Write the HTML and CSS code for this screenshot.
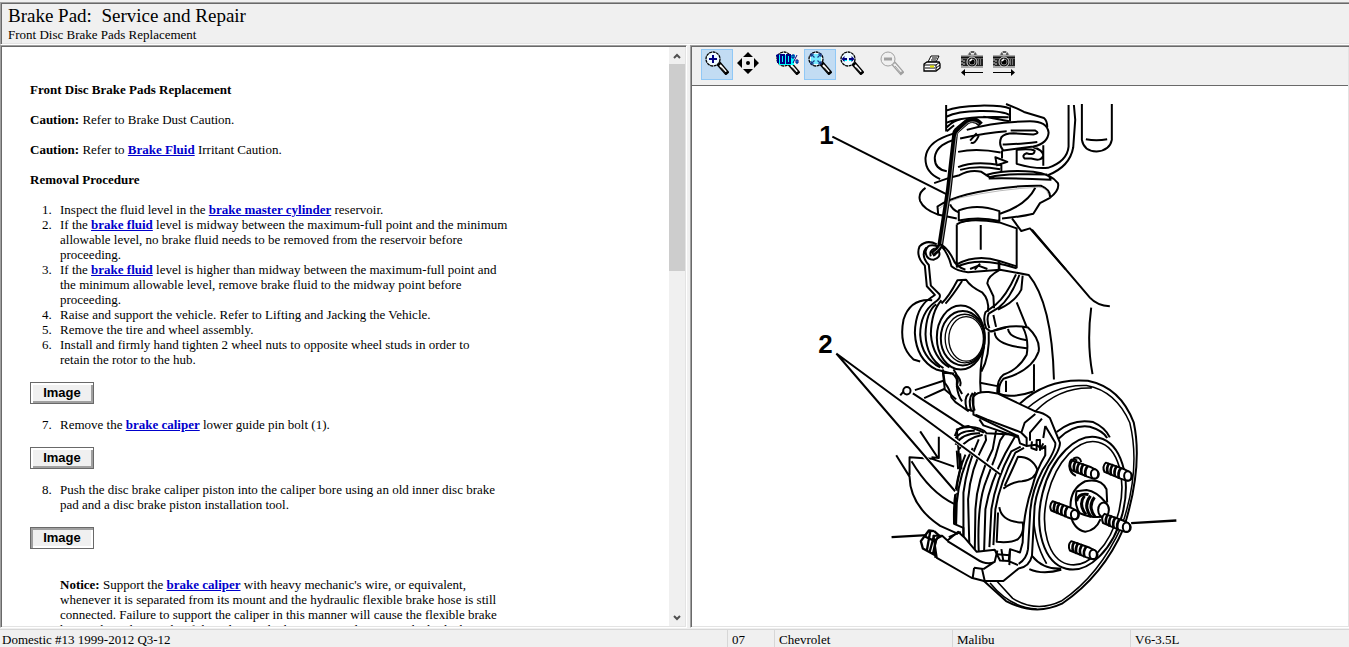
FILE: index.html
```html
<!DOCTYPE html>
<html lang="en">
<head>
<meta charset="utf-8">
<title>Brake Pad: Service and Repair</title>
<link rel="stylesheet" href="styles.css">
</head>
<body>
<svg class="defs" aria-hidden="true">
  <defs>
    <symbol id="glass" viewBox="0 0 24 24">
      <path d="M14 13L21 21" stroke="#000" stroke-width="5" stroke-linecap="square"/>
      <path d="M15 14L21 21" stroke="#fff" stroke-width="2"/>
      <path d="M16 16.500L21 22" stroke="#000" stroke-width="1"/>
      <circle cx="8" cy="8" r="7" fill="#eefaff" stroke="#000" stroke-width="1.300" stroke-dasharray="3 .6"/>
    </symbol>
    <symbol id="camera" viewBox="0 0 24 24">
      <path d="M8 5l2-3h5l2 3z" fill="#eee" stroke="#888" stroke-width="1"/>
      <path d="M11 2h3M9 4h2M14 4h2" stroke="#000"/>
      <path d="M1 5h22v13H1z" fill="#a8a8a8"/>
      <path d="M1 7.500h22" stroke="#111" stroke-width="2"/>
      <path d="M1 9h22v7H1z" fill="#222"/>
      <path d="M2 9v7M4 10v5" stroke="#ccc" stroke-dasharray="2 1"/>
      <circle cx="12" cy="12" r="5" fill="#111" stroke="#ddd"/>
      <circle cx="12" cy="12" r="3" fill="#000" stroke="#888"/>
      <path d="M10 11l2-2" stroke="#fff" stroke-width="1.500"/>
      <path d="M18 10h4M18 12h4M18 14h4" stroke="#ccc" stroke-dasharray="1 1"/>
    </symbol>
    <g id="stud">
      <path d="M4 4L60 24 72 30Q86 38 82 50 78 60 66 58L48 52 0 32Q-8 16 4 4z" fill="#fff"/>
      <path d="M14 6Q4 20 10 36M26 9Q14 24 20 42M38 14Q26 28 32 46M50 20Q38 34 44 52" stroke-width="8"/>
      <ellipse cx="70" cy="44" rx="11" ry="14" fill="#fff"/>
    </g>
  </defs>
</svg>

<header class="heading">
  <h1>Brake Pad:&nbsp; Service and Repair</h1>
  <p>Front Disc Brake Pads Replacement</p>
</header>

<main class="panes">
  <section class="pane article-pane">
    <article class="article">
      <p><b>Front Disc Brake Pads Replacement</b></p>
      <p><b>Caution:</b> Refer to Brake Dust Caution.</p>
      <p><b>Caution:</b> Refer to <a href="#">Brake Fluid</a> Irritant Caution.</p>
      <p><b>Removal Procedure</b></p>
      <ol>
        <li>Inspect the fluid level in the <a href="#">brake master cylinder</a> reservoir.</li>
        <li>If the <a href="#">brake fluid</a> level is midway between the maximum-full point and the minimum allowable level, no brake fluid needs to be removed from the reservoir before proceeding.</li>
        <li>If the <a href="#">brake fluid</a> level is higher than midway between the maximum-full point and the minimum allowable level, remove brake fluid to the midway point before proceeding.</li>
        <li>Raise and support the vehicle. Refer to Lifting and Jacking the Vehicle.</li>
        <li>Remove the tire and wheel assembly.</li>
        <li>Install and firmly hand tighten 2 wheel nuts to opposite wheel studs in order to<br>retain the rotor to the hub.</li>
      </ol>
      <button class="image-button" type="button">Image</button>
      <ol start="7">
        <li>Remove the <a href="#">brake caliper</a> lower guide pin bolt (1).</li>
      </ol>
      <button class="image-button" type="button">Image</button>
      <ol start="8">
        <li>Push the disc brake caliper piston into the caliper bore using an old inner disc brake pad and a disc brake piston installation tool.</li>
      </ol>
      <button class="image-button pressed" type="button">Image</button>
      <p class="notice"><b>Notice:</b> Support the <a href="#">brake caliper</a> with heavy mechanic's wire, or equivalent, whenever it is separated from its mount and the hydraulic flexible brake hose is still connected. Failure to support the caliper in this manner will cause the flexible brake hose to bear the weight of the caliper, which may cause damage to the brake hose</p>
    </article>
    <div class="scrollbar">
      <button class="arrow" type="button" aria-label="Scroll up"><svg width="8" height="8" viewBox="0 0 8 8"><path d="M1 6L4 3 7 6" fill="none" stroke="#505050" stroke-width="2"/></svg></button>
      <div class="track"><div class="thumb"></div></div>
      <button class="arrow" type="button" aria-label="Scroll down"><svg width="8" height="8" viewBox="0 0 8 8"><path d="M1 2L4 5 7 2" fill="none" stroke="#505050" stroke-width="2"/></svg></button>
    </div>
  </section>

  <section class="pane image-pane">
    <div class="toolbar">
      <div class="tools">
        <button class="tool active" type="button" aria-label="Zoom in"><svg viewBox="0 0 24 24"><use href="#glass"/><path d="M8 4v8M4 8h8" stroke="#000080" stroke-width="2"/></svg></button>
        <button class="tool" type="button" aria-label="Pan"><svg viewBox="0 0 24 24"><path d="M11 1l5 5H6zM11 23l5-5H6zM0 12l5-5v10zM22 12l-5-5v10z"/><circle cx="11" cy="12" r="2"/></svg></button>
      </div>
      <div class="tools">
        <button class="tool" type="button" aria-label="Actual size"><svg viewBox="0 0 24 24"><use href="#glass"/><path d="M2 5h3v8H3M7 5h4v8H7zM13 5h4v8h-4z" fill="#00ffff" stroke="#00ffff" stroke-width="2"/><path d="M0 5l2-1v8M5 4h3v8H5zM11 4h3v8h-3z" fill="none" stroke="#000080" stroke-width="2"/><path d="M17 12l4-8" stroke="#000080"/><path d="M17 5h2M20 11h2" stroke="#00cfff" stroke-width="3"/><path d="M16 4h2v3h-2zM20 9h2v3h-2z" fill="none" stroke="#000080"/></svg></button>
        <button class="tool active" type="button" aria-label="Fit to window"><svg viewBox="0 0 24 24"><use href="#glass"/><path d="M3 3h10v10H3z" fill="#77eaff"/><path d="M3 6V3h3M10 3h3v3M13 10v3h-3M6 13H3v-3M3 3l3.500 3.500M13 3L9.500 6.500M13 13L9.500 9.500M3 13l3.500-3.500" fill="none" stroke="#1a3c8c" stroke-width="1.200"/></svg></button>
        <button class="tool" type="button" aria-label="Fit to width"><svg viewBox="0 0 24 24"><use href="#glass"/><path d="M3 9h4M9 9h4" stroke="#00ffff" stroke-width="2"/><path d="M1.500 8l3-3v2h2.500v2H4.500v2zM14.500 8l-3-3v2H9v2h2.500v2z" fill="#000080"/></svg></button>
      </div>
      <div class="tools">
        <button class="tool" type="button" disabled aria-label="Zoom out"><svg viewBox="0 0 24 24"><path d="M14 13L21 21" stroke="#a0a0a0" stroke-width="5" stroke-linecap="square"/><path d="M14 13L21 21" stroke="#f0f0f0" stroke-width="2.500"/><path d="M15 15l6 7" stroke="#a0a0a0"/><circle cx="8" cy="8" r="7" fill="#f0f0f0" stroke="#a0a0a0"/><path d="M4 8h8" stroke="#a0a0a0" stroke-width="3"/></svg></button>
      </div>
      <div class="tools">
        <button class="tool" type="button" aria-label="Print"><svg viewBox="0 0 24 24"><path d="M8 11l3-6h8l-3 6z" fill="#fff" stroke="#000"/><path d="M12 7h5M11 9h5" stroke="#000"/><path d="M4 13l3-2h12l1 2v4l-4 3H4z" fill="#fff" stroke="#000" stroke-width="1.300"/><path d="M4 14h12v5M16 14l4-3M16 17l4-3" fill="none" stroke="#000"/><path d="M5 17h10" stroke="#000"/><path d="M10 15.500h4" stroke="#e6e600" stroke-width="2"/></svg></button>
      </div>
      <div class="tools">
        <button class="tool" type="button" aria-label="Previous image"><svg viewBox="0 0 24 26"><use href="#camera" width="24" height="24"/><path d="M4 22.500h19" stroke="#000"/><path d="M1 22.500l4-3.500v7z"/></svg></button>
        <button class="tool" type="button" aria-label="Next image"><svg viewBox="0 0 24 26"><use href="#camera" width="24" height="24"/><path d="M1 22.500h19" stroke="#000"/><path d="M23 22.500l-4-3.500v7z"/></svg></button>
      </div>
    </div>
    <div class="canvas">
      <svg class="diagram" viewBox="692 86 656 541" role="img" aria-label="Front strut, brake caliper and rotor">
        <g fill="none" stroke="#000" stroke-width="6" stroke-linejoin="round">
          <!-- strut and coil spring -->
          <g transform="translate(800 90) scale(.33333)">
            <path d="M438 45V125M630 52V95M618 42L652 56 672 66 732 84Q742 92 742 112M438 62Q470 48 540 47T630 56M440 80Q470 64 540 63T630 76M440 98Q490 78 626 82M440 112Q460 92 482 88M550 80L628 94M440 124L462 106"/>
            <path d="M806 45V170Q802 214 744 234 706 238 650 222V178M822 45L826 90 820 172Q810 230 744 256"/>
            <path d="M846 42V150Q852 184 890 185 930 182 936 150V42M858 148Q890 154 922 148" />
            <path d="M420 268Q374 248 376 204 380 160 440 138L468 128M500 120Q580 96 690 94 742 94 746 128 744 160 700 170L610 182Q594 164 604 142 614 130 640 130L700 134Q722 130 706 122L632 122M440 244Q402 238 404 202 408 168 456 152M480 146Q560 128 620 124M608 164Q640 164 712 156M606 182L606 206M474 186Q530 174 602 188M700 172Q728 180 730 196 726 216 694 206L674 206Q664 196 680 190 704 198 704 182Q690 176 650 180M730 166V228"/>
            <path d="M474 232Q520 212 604 226V246M480 240Q530 226 600 238M586 202L622 216 590 226z"/>
            <path d="M402 280Q430 270 454 262L478 256Q510 238 544 246L568 262Q620 250 742 254M556 256Q620 238 700 246 752 252 774 280 780 300 750 324L720 340 700 372Q670 380 606 386M376 294Q352 310 360 334 370 358 412 374L470 386M750 322Q752 300 724 288 620 286 500 314 440 330 412 350L414 372M706 294Q680 346 600 372M746 256L752 270Q640 264 566 266M450 344Q456 360 476 368"/>
            <path d="M744 312Q740 294 716 292 600 298 480 324 440 336 418 356" stroke="#999" stroke-width="2"/>
            <path d="M476 362Q530 340 598 364V394Q540 380 476 392z" fill="#fff"/>
            <path d="M470 404Q500 382 598 398L650 416V536M470 404V530M542 406V480M470 524Q530 492 598 514L650 530M510 538L535 528 562 538M598 516V540M636 386L664 424 690 416 798 540"/>
            <path d="M480 398Q540 384 596 394" stroke-width="4"/>
            <path d="M512 158Q524 164 536 138M510 152L530 130" stroke-width="6"/>
            <path d="M542 104Q522 82 500 96L474 118Q464 124 464 140L446 300 420 468Q412 484 396 494" stroke-width="17"/>
            <path d="M536 102Q520 90 502 100L478 122Q470 128 468 142L448 310 424 464Q416 480 400 490" stroke="#999" stroke-width="3"/>
            <path d="M96 140L440 314"/>
          </g>
          <!-- steering knuckle -->
          <g transform="translate(880 230) scale(.33333)">
            <path d="M170 44Q140 28 118 50 106 80 134 108L140 170 164 196 150 206Q106 234 104 310 108 390 168 420L214 432M184 50Q204 70 214 110 230 124 264 128L360 120 446 136Q516 220 522 450M176 42Q200 50 218 86 226 110 256 120"/>
            <path d="M138 54Q120 78 146 106L152 168 178 194Q184 204 164 218 120 250 120 316 124 384 180 414M172 50Q142 38 136 66 138 90 160 90 184 84 176 64M164 56Q146 62 152 80"/>
            <path d="M156 212Q90 206 70 270 54 350 100 390L120 396M168 224Q138 246 136 314 138 384 190 416M184 212Q154 244 152 314 158 386 208 414M184 222Q206 202 232 152L258 150Q270 170 306 188 328 210 324 246"/>
            <path d="M196 222Q216 200 246 154M360 120Q320 142 322 162L340 200 342 236M408 134Q378 200 346 226L316 248Q308 270 318 296L332 306 378 294M418 136Q392 206 356 234L326 252Q318 270 328 296M428 138L424 180Q406 216 354 240M410 218L440 292M340 256L348 292"/>
            <path d="M228 112Q300 78 410 116M300 102L284 120M356 94V118"/>
            <ellipse cx="242" cy="324" rx="72" ry="96" fill="#fff"/>
            <ellipse cx="248" cy="326" rx="66" ry="82"/>
            <ellipse cx="254" cy="327" rx="59" ry="73" stroke-width="4"/>
            <ellipse cx="258" cy="328" rx="52" ry="67" stroke-width="4"/>
            <path d="M312 294V352Q296 424 302 490M326 306Q330 380 304 426"/>
            <path d="M334 306Q390 282 444 294 482 330 476 366 456 424 370 448 354 466 358 490M428 292Q448 330 440 376 416 420 370 436 350 452 352 490M384 298Q386 324 440 332M344 308Q344 346 440 356M462 404V486M378 454V488M350 490Q390 510 460 486M300 460L352 470"/>
            <path d="M188 426L194 480Q214 496 228 510M216 432Q234 444 230 466L246 494M226 434Q246 450 240 470"/>
            <path d="M456 0L630 204Q652 228 690 230M634 234Q620 340 638 434M104 482L190 454M132 506L194 478M60 498L72 484"/>
            <circle cx="80" cy="484" r="11" fill="#fff"/>
          </g>
          <!-- rotor, hub and caliper -->
          <g transform="translate(860 370) scale(.33333)">
            <path d="M480 102Q564 24 684 34 782 54 822 160 850 292 792 476 730 620 606 704 526 742 438 696L370 634"/>
            <path d="M500 118Q584 44 680 48 768 64 810 160 844 300 786 470 718 620 604 696 530 732 458 688L410 636M526 126Q600 52 696 56M390 642Q450 716 530 720" stroke-width="4.500"/>
            <path d="M590 188Q640 146 700 158 736 174 750 204M596 208Q640 164 690 172 730 184 742 206"/>
            <path d="M508 600Q548 618 604 602M516 560Q550 602 604 598"/>
            <ellipse cx="668" cy="402" rx="124" ry="203" transform="rotate(14 668 402)" fill="#fff"/>
            <ellipse cx="670" cy="402" rx="110" ry="189" transform="rotate(14 670 402)" stroke-width="5"/>
            <path d="M522 374Q510 500 560 584" stroke-width="5"/>
            <path d="M632 420Q628 360 676 336 724 326 740 360L742 400M632 436Q640 480 676 488 708 484 722 450" />
            <use href="#stud" x="634" y="270"/>
            <use href="#stud" x="734" y="276"/>
            <use href="#stud" x="574" y="392"/>
            <use href="#stud" x="630" y="512"/>
            <path d="M650 366L680 362Q710 366 738 400 754 420 738 440 704 450 660 432 642 410 650 366z" fill="#fff"/>
            <path d="M650 396Q656 370 686 376M674 380Q654 404 678 436M692 380Q668 410 694 444M704 384Q682 412 706 444" stroke-width="9"/>
            <ellipse cx="731" cy="422" rx="16" ry="22" fill="#fff"/>
            <use href="#stud" x="730" y="430"/>
            <path d="M814 462L950 454" stroke-width="7"/>
            <path d="M652 274Q630 260 628 290 630 312 648 320M640 268Q660 258 664 278"/>
            <!-- pads and caliper body -->
            <path d="M290 180Q350 162 380 192L470 196Q520 230 560 238L552 290Q520 340 510 400L508 520Q500 550 470 560L340 550 310 530V476L282 464Q278 380 300 300z" fill="#fff"/>
            <path d="M284 200Q290 172 324 170L372 190M282 214Q296 182 344 184M286 226Q308 190 360 192M296 240Q320 206 368 196M290 244L294 300M300 252L304 300M316 256Q296 300 286 380L282 464M338 236Q298 310 290 400L288 466M356 210Q320 290 310 370L310 530M376 196L378 212Q330 300 324 390L328 540M408 184L398 240Q350 330 346 420L344 548M436 190L420 214 406 262 380 330Q350 400 356 548M466 200L436 252Q390 340 376 420L372 550M482 232L454 246Q408 330 394 420L388 534M492 236L466 250Q420 340 406 420L400 528"/>
            <path d="M434 350Q462 290 474 262 516 262 532 300 528 330 486 336 456 338 430 358M418 414Q424 458 488 460 494 490 474 510 454 522 410 518L414 430"/>
            <path d="M340 82Q350 66 386 68L412 72 526 126Q550 128 570 146L600 220Q602 240 566 290 530 360 524 410L516 560Q508 594 476 598L430 636H372L334 626 230 566 220 500 246 500 262 514 294 488 312 504 350 548 404 542 420 574 446 576 450 540 480 550 488 520Q490 430 516 356 530 300 556 258L556 230 546 238 528 226 500 230 480 222 474 200 340 136z" fill="#fff"/>
            <path d="M346 136L380 150 470 184 484 190 494 160 526 134M358 150L370 168 474 204M484 190L500 206V230M510 214V190L546 148M556 170L586 220Q590 240 548 302 512 370 510 440L504 540Q500 570 476 584M556 170L550 206M516 216L514 236 530 242 530 212 540 212V242L550 222" />
            <path d="M326 72Q310 86 320 120L342 126M338 70Q322 90 334 126M346 68Q330 88 344 124M248 0L254 40Q270 60 274 84L286 98 306 112 326 126M280 0Q300 26 290 50 294 80 306 96M250 10L282 12"/>
            <path d="M262 516L350 570Q380 590 404 578L412 544M246 500L230 508Q220 530 226 566M266 504L302 488M342 596L338 626M366 600L374 636M342 596L370 600M370 600L404 578M446 576L474 588M424 540L430 576M450 540L448 588"/>
            <path d="M222 486L206 484 182 516 188 538 228 560M222 486L238 500 224 516M210 488L200 544M222 498L208 550M228 510L218 556M194 502L224 516" stroke-width="7"/>
            <path d="M94 504L200 498" stroke-width="7"/>
            <path d="M108 258L148 322Q150 410 240 470L294 494M148 318V264L214 268 282 292M154 276Q210 370 282 404M180 186L232 264M236 202V266L214 264M158 72L312 172"/>
          </g>
          <path d="M836 354L956 494M836 354L1000 474" stroke="#fff" stroke-width="4"/>
          <path d="M836 354L955 492M836 354L1000 475" stroke-width="2"/>
        </g>
        <text class="callout" x="819" y="144">1</text>
        <text class="callout" x="818" y="353">2</text>
      </svg>
    </div>
  </section>
</main>

<footer class="status">
  <span class="cell source">Domestic #13 1999-2012 Q3-12</span>
  <span class="cell year">07</span>
  <span class="cell make">Chevrolet</span>
  <span class="cell make">Malibu</span>
  <span class="cell engine">V6-3.5L</span>
</footer>
</body>
</html>
```
FILE: styles.css
```css
* { box-sizing: border-box; }

body {
  margin: 0;
  height: 100vh;
  display: flex;
  flex-direction: column;
  overflow: hidden;
  background: #f0f0f0;
  color: #000;
  font-family: "Liberation Serif", "Times New Roman", serif;
  font-size: 13px;
  line-height: 15px;
}

.defs { position: absolute; width: 0; height: 0; }

.heading, .pane {
  border: 1px solid;
  border-color: #a0a0a0 #fff #fff #a0a0a0;
}

.heading {
  margin-top: 2px;
  padding: 2px 7px 0;
  border-right: 0;
  height: 43px;
  box-shadow: inset 1px 1px #696969, inset 0 -1px #e3e3e3;
}

.heading h1 {
  margin: 0;
  font-size: 18px;
  font-weight: normal;
  line-height: 21px;
}

.heading p { margin: 0; padding-top: 1px; }

.panes {
  flex: 1;
  min-height: 0;
  display: grid;
  grid-template-columns: 687fr 659fr;
  gap: 3px;
}

.pane {
  min-width: 0;
  min-height: 0;
  display: flex;
  padding: 1px;
  background: #fff;
  box-shadow: inset 1px 1px #696969, inset -1px -1px #e3e3e3;
}

.article {
  flex: 1;
  overflow: hidden;
  padding: 35px 28px 0;
}

.article p, .article ol { margin: 0 0 15px; }
.article ol { padding-left: 25px; max-width: 478px; }
.article li { padding-left: 5px; }
.article a { color: #0000cc; font-weight: bold; }
.article .notice { margin: 28px 0 0; padding-left: 30px; max-width: 478px; }

.image-button {
  display: block;
  width: 64px;
  height: 22px;
  margin: 0 0 13px;
  padding: 0;
  border: 1px solid #696969;
  background: #f0f0f0;
  box-shadow: inset 2px 2px #fff, inset -2px -2px #a0a0a0;
  color: #000;
  font: bold 13px/18px "Liberation Sans", Arial, sans-serif;
}

.image-button.pressed { box-shadow: inset 2px 2px #a0a0a0, inset -2px -2px #fff; }

.scrollbar {
  width: 16px;
  display: flex;
  flex-direction: column;
  background: #f0f0f0;
}

.arrow {
  height: 17px;
  padding: 0;
  border: 0;
  background: none;
  display: grid;
  place-items: center;
}

.track { flex: 1; }
.thumb { height: 38%; background: #cdcdcd; }

.image-pane { flex-direction: column; border-right: 0; }

.toolbar {
  display: flex;
  gap: 7px;
  height: 39px;
  padding: 2px 9px;
  background: #f0f0f0;
  border-bottom: 1px solid #696969;
}

.tools { display: flex; }

.tool {
  width: 32px;
  height: 31px;
  padding: 0 0 3px;
  display: grid;
  place-items: center;
  border: 1px solid transparent;
  background: none;
}

.tool svg { width: 24px; height: 26px; }
.tool.active { background: #c2dcf3; border-color: #90c8f6; }

.tools + .tools + .tools { margin-left: 1px; }

.canvas { flex: 1; min-height: 0; }
.diagram { display: block; width: 100%; height: 100%; }
.callout { font: bold 26px "Liberation Sans", Arial, sans-serif; }

.heading h1 { font-size: 19px; }

.status {
  display: flex;
  height: 18px;
  margin-top: 1px;
  border-top: 1px solid #d7d7d7;
}

.cell {
  padding: 2px 0 0 4px;
  border-left: 1px solid #d7d7d7;
}

.source { flex: 1; border-left: 0; padding-left: 2px; }
.year { width: 47px; }
.make { width: 178px; }
.engine { width: 219px; }
```
